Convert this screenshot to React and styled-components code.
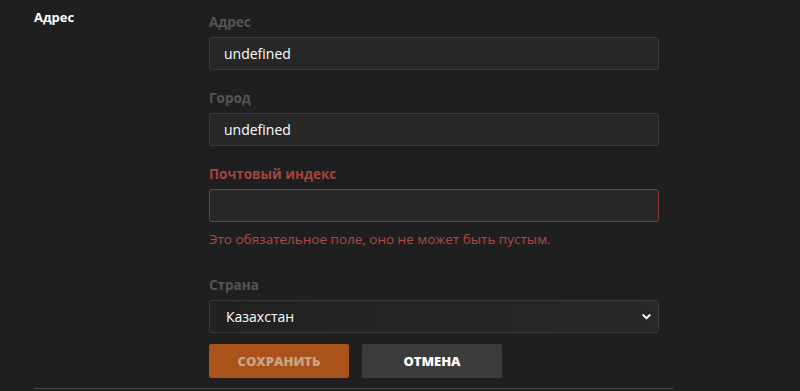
import React from "react";
import styled, { createGlobalStyle } from "styled-components";

const Global = createGlobalStyle`
  html, body {
    margin: 0;
    background: #1f1f1f;
    font-family: "Open Sans", "Noto Sans", sans-serif;
  }
`;

const fields = [
  { label: "Адрес", value: "undefined" },
  { label: "Город", value: "undefined" },
  { label: "Почтовый индекс", value: "", error: "Это обязательное поле, оно не может быть пустым." },
];

export default function App() {
  return (
    <>
      <Global />
      <Page>
        <Section>
          <SideTitle>Адрес</SideTitle>
          <Form>
            {fields.map((f) => (
              <Field key={f.label}>
                <Label $error={!!f.error}>{f.label}</Label>
                <Input $error={!!f.error} defaultValue={f.value} />
                {f.error && <ErrorText>{f.error}</ErrorText>}
              </Field>
            ))}
            <Field>
              <Label>Страна</Label>
              <SelectBox type="button" role="combobox">
                <span>Казахстан</span>
                <Chevron viewBox="0 0 12 12">
                  <path d="M2.5 4.5 L6 8 L9.5 4.5" fill="none" stroke="#fff" strokeWidth="2.2" strokeLinecap="round" strokeLinejoin="round" />
                </Chevron>
              </SelectBox>
            </Field>
            <Buttons>
              <Button $primary disabled>Сохранить</Button>
              <Button>Отмена</Button>
            </Buttons>
          </Form>
        </Section>
      </Page>
    </>
  );
}

const Page = styled.div`
  padding: 0 127px 0 34px;
  height: 391px;
  overflow: hidden;
`;

const Section = styled.div`
  display: flex;
  padding-top: 9px;
  padding-bottom: 10px;
  border-bottom: 1px solid #4a4a4a;
`;

const SideTitle = styled.h3`
  margin: 0;
  width: 175px;
  flex-shrink: 0;
  font-size: 13px;
  font-weight: 700;
  color: #fff;
  line-height: 17px;
`;

const Form = styled.div`
  width: 450px;
  display: flex;
  flex-direction: column;
`;

const Field = styled.div`
  display: flex;
  flex-direction: column;
  margin-bottom: 15px;
`;

const Label = styled.label`
  font-size: 13.5px;
  font-weight: 700;
  line-height: 18px;
  margin-top: 4px;
  margin-bottom: 6px;
  color: ${({ $error }) => ($error ? "#a3453d" : "#555555")};
`;

const Input = styled.input`
  box-sizing: border-box;
  height: 33px;
  width: 100%;
  margin: 0;
  padding-left: 14px;
  padding-right: 14px;
  background: #272727;
  border: 1px solid ${({ $error }) => ($error ? "#8e3a34" : "#3a3a3a")};
  border-radius: 3px;
  color: #fff;
  font-family: inherit;
  font-size: 14px;
  outline: none;
`;

const ErrorText = styled.div`
  margin-top: 8px;
  margin-bottom: 9px;
  font-size: 13.5px;
  line-height: 18px;
  color: #b14a42;
`;

const SelectBox = styled.button`
  box-sizing: border-box;
  display: flex;
  align-items: center;
  justify-content: space-between;
  height: 33px;
  width: 100%;
  margin: 0;
  padding: 0 6px 0 16px;
  background: linear-gradient(90deg, #212121, #282828);
  border: 1px solid #3a3a3a;
  border-radius: 3px;
  color: #fff;
  font-family: inherit;
  font-size: 14px;
  text-align: left;
  cursor: pointer;
`;

const Chevron = styled.svg`
  width: 11px;
  height: 11px;
`;

const Buttons = styled.div`
  display: flex;
  gap: 13px;
  margin-top: -4px;
`;

const Button = styled.button`
  width: 140px;
  height: 34px;
  border: none;
  border-radius: 2px;
  font-family: inherit;
  font-weight: 800;
  font-size: 13px;
  text-transform: uppercase;
  background: ${({ $primary }) => ($primary ? "#a9531b" : "#3c3c3c")};
  color: ${({ $primary }) => ($primary ? "#caa487" : "#ffffff")};
`;
